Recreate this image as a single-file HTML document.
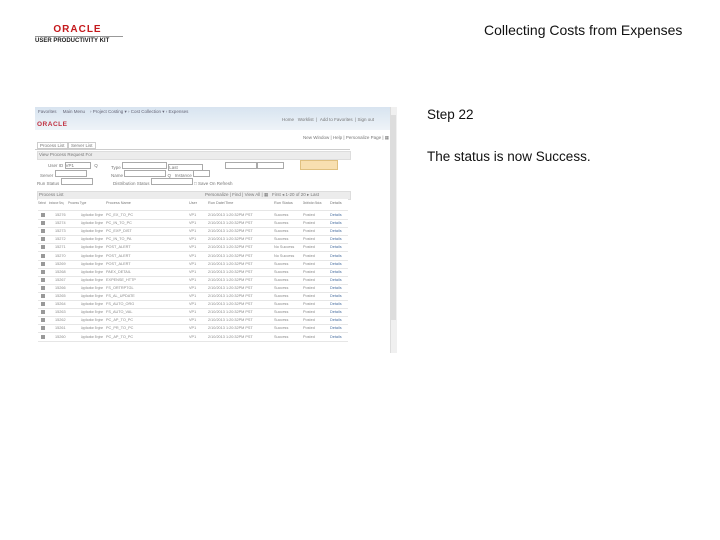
<!DOCTYPE html>
<html><head><style>
body{margin:0;width:720px;height:540px;background:#fff;font-family:"Liberation Sans",sans-serif;position:relative;overflow:hidden}
.a{position:absolute;white-space:nowrap}
.t{font-size:4.5px;color:#777}
.row{position:absolute;left:38px;width:310px;height:8px;font-size:3.8px;color:#888;border-bottom:1px solid #e6e6e6}
.row span{position:absolute;top:2px;transform-origin:0 0}
.cb{position:absolute;left:3px;top:2px;width:4px;height:4px;background:#999}
</style></head><body>
<div class="a" style="left:35px;top:24px;width:85px;text-align:center;color:#c4191c;font-weight:bold;font-size:10px;letter-spacing:1px;line-height:11px">ORACLE</div>
<div class="a" style="left:35px;top:36px;width:88px;height:1px;background:#999"></div>
<div class="a" style="left:35px;top:38px;font-size:6px;font-weight:bold;color:#222">USER PRODUCTIVITY KIT</div>
<div class="a" style="left:484px;top:22px;font-size:14px;color:#111">Collecting Costs from Expenses</div>
<div class="a" style="left:427px;top:107px;font-size:13.5px;color:#111">Step 22</div>
<div class="a" style="left:427px;top:149px;font-size:13.5px;color:#111">The status is now Success.</div>

<div class="a" style="left:35px;top:107px;width:362px;height:246px;background:#fff;overflow:hidden">
 <div class="a" style="left:0;top:0;width:362px;height:23px;background:linear-gradient(#d8e4f0,#eef3f8)"></div>
 <div class="a t" style="left:3px;top:2px;color:#667">Favorites &nbsp; &nbsp; Main Menu &nbsp; &nbsp;› Project Costing ▾ › Cost Collection ▾ › Expenses</div>
 <div class="a" style="left:2px;top:14px;font-size:6.5px;color:#c03040;font-weight:bold;letter-spacing:.5px">ORACLE</div>
 <div class="a t" style="left:247px;top:10px">Home &nbsp; Worklist &nbsp;| &nbsp;Add to Favorites &nbsp;| Sign out</div>
 <div class="a t" style="left:268px;top:28px">New Window | Help | Personalize Page | ▦</div>
 <div class="a t" style="left:2px;top:35px;border:1px solid #ccc;padding:0 2px">Process List</div>
 <div class="a t" style="left:33px;top:35px;border:1px solid #ccc;padding:0 2px">Server List</div>
 <div class="a" style="left:0;top:42px;width:315px;height:1px;background:#ccc"></div>
 <div class="a" style="left:2px;top:44px;width:312px;height:7px;background:#ececec;border:1px solid #ddd"></div>
 <div class="a t" style="left:4px;top:45px">View Process Request For</div>
 <div class="a t" style="left:13px;top:55px">User ID <span style="display:inline-block;width:24px;height:5px;border:1px solid #aaa">VP1</span> &nbsp;&nbsp;Q</div>
 <div class="a t" style="left:76px;top:55px">Type <span style="display:inline-block;width:43px;height:5px;border:1px solid #aaa"></span> <span style="display:inline-block;width:33px;height:5px;border:1px solid #aaa">Last</span></div>
 <div class="a" style="left:190px;top:55px;width:30px;height:5px;border:1px solid #aaa"></div>
 <div class="a" style="left:222px;top:55px;width:25px;height:5px;border:1px solid #aaa"></div>
 <div class="a" style="left:265px;top:53px;width:36px;height:8px;background:#f8dfb0;border:1px solid #e0c080"></div>
 <div class="a t" style="left:5px;top:63px">Server <span style="display:inline-block;width:30px;height:5px;border:1px solid #aaa"></span></div>
 <div class="a t" style="left:76px;top:63px">Name <span style="display:inline-block;width:40px;height:5px;border:1px solid #aaa"></span> Q &nbsp; Instance <span style="display:inline-block;width:15px;height:5px;border:1px solid #aaa"></span></div>
 <div class="a t" style="left:2px;top:71px">Run Status <span style="display:inline-block;width:30px;height:5px;border:1px solid #aaa"></span></div>
 <div class="a t" style="left:78px;top:71px">Distribution Status <span style="display:inline-block;width:40px;height:5px;border:1px solid #aaa"></span> □ Save On Refresh</div>
 <div class="a" style="left:2px;top:84px;width:312px;height:7px;background:#ececec;border:1px solid #ddd"></div>
 <div class="a t" style="left:4px;top:85px">Process List</div>
 <div class="a t" style="left:170px;top:85px">Personalize | Find | View All | ▦ &nbsp; First ◂ 1-20 of 20 ▸ Last</div>
 <div class="a" style="left:355px;top:0;width:7px;height:246px;background:#f0f0f0;border-left:1px solid #ddd"></div>
 <div class="a" style="left:356px;top:8px;width:5px;height:205px;background:#ddd"></div>
</div>
<div class="row" style="top:199px;height:11px;background:#fff;color:#777"><span style="left:0;transform:scaleX(.75)">Select</span><span style="left:11px;transform:scaleX(.65)">Instance Seq.</span><span style="left:30px;transform:scaleX(.8)">Process Type</span><span style="left:68px">Process Name</span><span style="left:151px">User</span><span style="left:170px">Run Date/Time</span><span style="left:236px">Run Status</span><span style="left:265px;transform:scaleX(.6)">Distribution Status</span><span style="left:292px">Details</span></div>
<div id="rows"></div>
<script>
var d=[["15276","PC_EX_TO_PC","Success"],["15274","PC_IN_TO_PC","Success"],["15273","PC_EXP_DIST","Success"],["15272","PC_IN_TO_PA","Success"],["15271","POST_ALERT","No Success"],["15270","POST_ALERT","No Success"],["15269","POST_ALERT","Success"],["15268","PAEX_DETAIL","Success"],["15267","EXPENSE_HTTP","Success"],["15266","FS_ORTRPTGL","Success"],["15265","FS_AL_UPDATE","Success"],["15264","FS_AUTO_ORG","Success"],["15263","FS_AUTO_VAL","Success"],["15262","PC_AP_TO_PC","Success"],["15261","PC_PR_TO_PC","Success"],["15260","PC_AP_TO_PC","Success"]],h="";
d.forEach(function(r,i){h+='<div class="row" style="top:'+(211+i*8.1)+'px"><div class="cb"></div><span style="left:17px">'+r[0]+'</span><span style="left:43px;transform:scaleX(.7)">Application Engine</span><span style="left:68px">'+r[1]+'</span><span style="left:151px">VP1</span><span style="left:170px">2/10/2013 1:20:32PM PST</span><span style="left:236px">'+r[2]+'</span><span style="left:265px">Posted</span><span style="left:292px;color:#4a6fa0">Details</span></div>'});
document.getElementById("rows").innerHTML=h;
</script>
</body></html>
